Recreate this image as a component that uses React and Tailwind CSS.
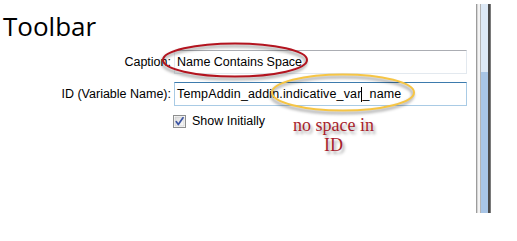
import React from 'react';

// Windows 7 style checkbox, 13x13
const CheckBox = () => (
  <svg width="13" height="13" viewBox="0 0 13 13" className="block shrink-0">
    <defs>
      <linearGradient id="cbFill" x1="0" y1="0" x2="1" y2="1">
        <stop offset="0" stopColor="#dcdcdc" />
        <stop offset="1" stopColor="#fbfbfb" />
      </linearGradient>
    </defs>
    <rect x="0.5" y="0.5" width="12" height="12" fill="#ffffff" stroke="#8e8f8f" />
    <rect x="2" y="2" width="9" height="9" fill="url(#cbFill)" stroke="#c4c4c4" strokeWidth="0.6" />
    <path d="M3.2 6.6 L5.3 9.6 L10 2.8" fill="none" stroke="#3c55a4" strokeWidth="1.7" strokeLinejoin="round" strokeLinecap="round" />
  </svg>
);

// the annotation ellipses drawn over the form
const Ellipse = ({ cx, cy, rx, ry, color }) => (
  <svg width="517" height="241" className="absolute left-0 top-0 pointer-events-none overflow-visible">
    <defs>
      <filter id={`sh-${color.slice(1)}`} x="-20%" y="-40%" width="140%" height="180%">
        <feGaussianBlur stdDeviation="1.6" />
      </filter>
    </defs>
    <ellipse cx={cx - 1} cy={cy + 2.5} rx={rx} ry={ry} fill="none" stroke="#000" strokeOpacity="0.35" strokeWidth="2.5" filter={`url(#sh-${color.slice(1)})`} />
    <ellipse cx={cx} cy={cy} rx={rx} ry={ry} fill="none" stroke={color} strokeWidth="2" />
  </svg>
);

const ScrollBar = () => (
  <div className="mt-[4px] h-[209px] flex">
    <div className="w-px bg-[#9c9c9c]" />
    <div className="w-px bg-[#d6d6d6]" />
    <div className="w-[2px] bg-[#f4f4f4]" />
    <div className="w-px bg-[#b4b4b4]" />
    <div className="w-[7px] flex flex-col">
      <div className="h-[68px] bg-[#dde9f6]" />
      <div className="flex-1 bg-[#a8c5e6]" />
    </div>
    <div className="w-[2px] bg-[#4b4b4b]" />
    <div className="w-px bg-[#7a7a7a]" />
  </div>
);

export default function App() {
  return (
    <div className="relative w-[517px] h-[241px] bg-white overflow-hidden flex" style={{ fontFamily: '"Liberation Sans", Arial, sans-serif' }}>
      <div className="w-[476px] shrink-0 flex flex-col">
        <h1 className="mt-[12px] pl-[3px] text-[26px] leading-[28px] text-black font-normal" style={{ fontFamily: '"Open Sans", "Noto Sans", sans-serif' }}>
          Toolbar
        </h1>

        <div className="mt-[10px] grid grid-cols-[171px_293px] gap-x-[3px] gap-y-[8px] items-center text-[12.5px] text-black">
          <div className="text-right">Caption:</div>
          <div className="h-[24px] border border-[#e3e9ef] border-t-[#abadb3] flex items-center pl-[2px]">
            Name Contains Space
          </div>

          <div className="text-right">ID (Variable Name):</div>
          <div className="h-[24px] border border-[#a9cbe5] border-t-[#3d7bad] flex items-center pl-[2px] tracking-[0.15px]">
            <span>TempAddin_addin.indicative_var</span>
            <span className="inline-block w-px h-[15px] bg-black" />
            <span>_name</span>
          </div>

          <div />
          <label className="flex items-center gap-[6px] -ml-px h-[14px]">
            <CheckBox />
            <span>Show Initially</span>
          </label>
        </div>
      </div>

      <ScrollBar />

      {/* annotations */}
      <Ellipse cx={235} cy={60} rx={72} ry={16.5} color="#b3141f" />
      <Ellipse cx={343} cy={92.5} rx={71} ry={18} color="#f6c545" />
      <div
        className="absolute left-[273px] top-[115px] w-[121px] text-center text-[18px] leading-[20px] text-[#a81e2b]"
        style={{ fontFamily: '"Liberation Serif", "Times New Roman", serif', textShadow: '2px 3px 3px rgba(0,0,0,0.35)' }}
      >
        no space in
        <br />
        ID
      </div>
    </div>
  );
}
